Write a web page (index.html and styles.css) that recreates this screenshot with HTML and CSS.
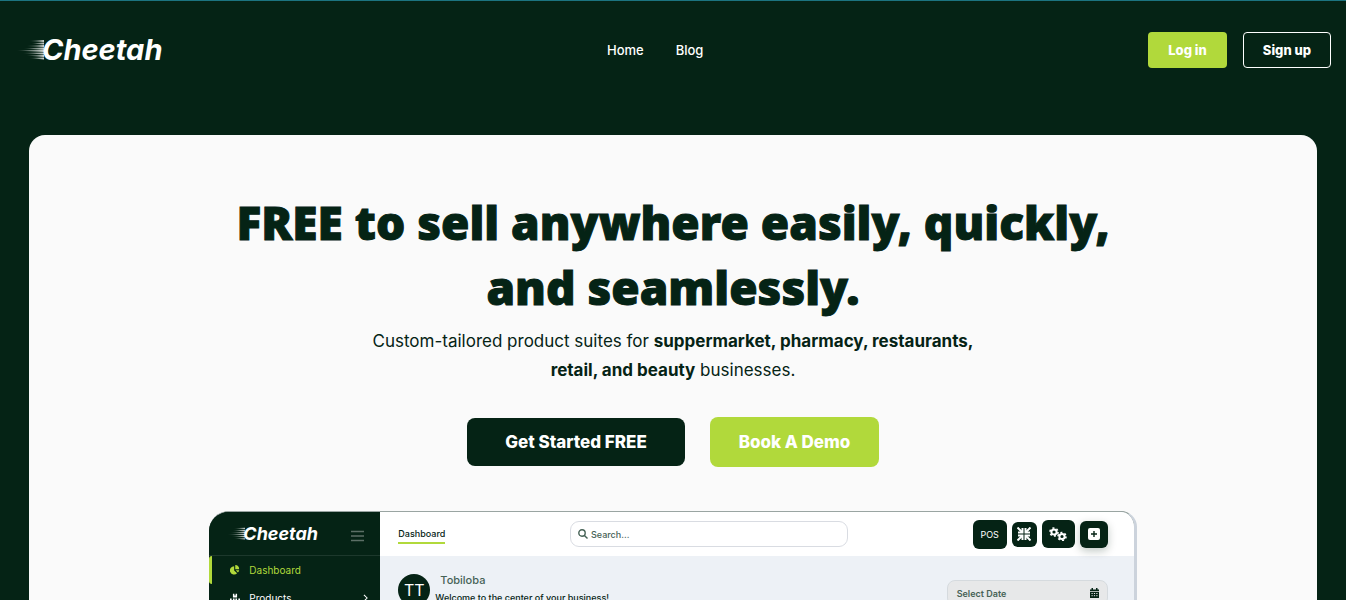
FILE: index.html
```html
<!DOCTYPE html>
<html lang="en">
<head>
<meta charset="utf-8">
<meta name="viewport" content="width=device-width, initial-scale=1">
<title>Cheetah</title>
<link rel="stylesheet" href="styles.css">
</head>
<body>
<header class="site-header">
  <a class="logo" href="#" aria-label="Cheetah">
    <svg class="logo-lines" viewBox="0 0 28 22" aria-hidden="true">
      <defs><linearGradient id="fade" x1="0" x2="1"><stop offset="0" stop-color="#fff" stop-opacity="0"/><stop offset="1" stop-color="#fff" stop-opacity=".8"/></linearGradient></defs>
      <g fill="url(#fade)"><path d="M13 2L28 1V3z"/><path d="M15 4.500L28 3.500V5.500z"/><path d="M10 7L28 6V8z"/><path d="M7 9.500L28 8.500V10.500z"/><path d="M0 11.500L28 10.500V13z"/><path d="M6 14L28 13.500V15.500z"/><path d="M10 16.500L28 16V18z"/><path d="M13 19L28 18.500V20.500z"/></g>
    </svg>
    <span class="logo-name">Cheetah</span>
  </a>
  <nav class="site-nav">
    <a href="#">Home</a>
    <a href="#">Blog</a>
  </nav>
  <div class="account">
    <button class="btn btn-login" type="button">Log in</button>
    <button class="btn btn-signup" type="button">Sign up</button>
  </div>
</header>
<main class="hero">
  <h1 class="hero-title">FREE to sell anywhere easily, quickly, and seamlessly.</h1>
  <p class="hero-text">Custom-tailored product suites for <strong>suppermarket, pharmacy, restaurants, retail, and beauty</strong> businesses.</p>
  <div class="actions">
    <button class="cta cta-start" type="button">Get Started FREE</button>
    <button class="cta cta-demo" type="button">Book A Demo</button>
  </div>
  <section class="preview" aria-label="Dashboard preview">
    <aside class="sidebar">
      <div class="sidebar-head">
        <div class="logo logo-small">
          <svg class="logo-lines" viewBox="0 0 28 22" aria-hidden="true">
            <g fill="url(#fade)"><path d="M10 2L28 1V3z"/><path d="M8 5.500L28 4.500V6.500z"/><path d="M4 8.500L28 7.500V9.500z"/><path d="M0 11.500L28 10.500V13z"/><path d="M6 14.500L28 14V16z"/><path d="M10 18L28 17.500V19.500z"/></g>
          </svg>
          <span class="logo-name">Cheetah</span>
        </div>
        <button class="menu" type="button" aria-label="Menu"><svg viewBox="0 0 13 12"><path d="M0 1.500h13M0 6h13M0 10.500h13" stroke="#5c6f66" stroke-width="1.500"/></svg></button>
      </div>
      <a class="side-link active" href="#">
        <svg viewBox="0 0 12 12"><path d="M5 1.500V6.500L8.500 10A5 5 0 1 1 5 1.500z"/><path d="M6.300 0A5 5 0 0 1 11 5H6.300z"/><path d="M7 6.200H11A5 5 0 0 1 9.500 9z"/></svg>
        <span>Dashboard</span>
      </a>
      <a class="side-link" href="#">
        <svg viewBox="0 0 12 12"><path d="M3.500 1H5.300V3H6.700V1H8.500V5.500H3.500zM0 6.500H2V8.500H3.500V6.500H5.500V11H0zM6.500 6.500H8.500V8.500H10V6.500H12V11H6.500z"/></svg>
        <span>Products</span>
        <svg class="chevron" viewBox="0 0 6 10"><path d="M1 1l4 4-4 4" fill="none" stroke="#fff" stroke-width="1.300"/></svg>
      </a>
    </aside>
    <div class="panel">
      <div class="topbar">
        <a class="tab" href="#">Dashboard</a>
        <label class="search">
          <svg viewBox="0 0 10 10" aria-hidden="true"><g fill="none" stroke="#466256" stroke-width="1.400"><circle cx="4" cy="4" r="3.200"/><path d="M6.400 6.400L9.500 9.500"/></g></svg>
          <input type="text" placeholder="Search..." aria-label="Search">
        </label>
        <div class="tools">
          <button class="tool tool-pos" type="button">POS</button>
          <button class="tool tool-shrink" type="button" aria-label="Exit full screen"><svg viewBox="0 0 14 14" fill="none" stroke="#fff" stroke-width="2"><path d="M.5.500L5 5M13.500.500L9 5M.5 13.500L5 9M13.500 13.500L9 9"/><path d="M1 5.500H5.500V1M13 5.500H8.500V1M1 8.500H5.500V13M13 8.500H8.500V13"/></svg></button>
          <button class="tool tool-settings" type="button" aria-label="Settings"><svg viewBox="0 0 18 14" fill="none" stroke="#fff"><circle cx="5" cy="5" r="2.600" stroke-width="2"/><circle cx="5" cy="5" r="4" stroke-width="1.600" stroke-dasharray="2 2.190"/><circle cx="13" cy="9.500" r="2.600" stroke-width="2"/><circle cx="13" cy="9.500" r="4" stroke-width="1.600" stroke-dasharray="2 2.190"/></svg></button>
          <button class="tool tool-add" type="button" aria-label="Add"><svg viewBox="0 0 12 12"><rect width="12" height="12" rx="2" fill="#fff"/><path d="M6 3v6M3 6h6" stroke="#052315" stroke-width="1.400"/></svg></button>
        </div>
      </div>
      <div class="content">
        <div class="avatar">TT</div>
        <div class="welcome">
          <span class="user">Tobiloba</span>
          <span class="greeting">Welcome to the center of your business!</span>
        </div>
        <button class="date" type="button"><span>Select Date</span>
          <svg viewBox="0 0 9 10"><path d="M0 1.500H1.500V0H3V1.500H6V0H7.500V1.500H9V3H0zM0 3.700H9V10H0z" fill="#052315"/><path d="M1.500 5.500h6M1.500 7.700h6" stroke="#e7e8e9" stroke-dasharray="1.200 1.200"/></svg>
        </button>
      </div>
    </div>
  </section>
</main>
</body>
</html>
```
FILE: styles.css
```css
* { box-sizing: border-box; }
body {
  margin: 0;
  height: 100vh;
  overflow: hidden;
  display: flex;
  flex-direction: column;
  border-top: 1px solid #1c7480;
  background: #052315;
  color: #052315;
  font-family: Inter, "Liberation Sans", sans-serif;
}
a { color: inherit; text-decoration: none; }
button { font: inherit; border: 0; cursor: pointer; }

.site-header {
  display: flex;
  justify-content: space-between;
  align-items: center;
  padding: 31px 15px 0 16px;
  color: #fff;
}
.logo { display: flex; align-items: center; color: #fff; }
.logo-lines { width: 28px; height: 22px; margin-right: -2px; }
.logo-name { font: italic 700 29px/36px Inter, sans-serif; }
.site-nav { display: flex; gap: 32px; font-size: 13px; font-weight: 500; }
.account { display: flex; justify-content: flex-end; gap: 16px; }
.btn {
  height: 36px;
  padding: 0 16px;
  border-radius: 4px;
  color: #fff;
  font-size: 13px;
  font-weight: 800;
}
.btn-login { min-width: 79px; background: #b1d93b; }
.btn-signup { min-width: 88px; background: transparent; border: 1px solid #fff; }

.hero {
  flex: 1;
  min-height: 0;
  margin: 67px 29px 0;
  padding-top: 55px;
  border-radius: 16px 16px 0 0;
  background: #fafafa;
  display: flex;
  flex-direction: column;
  align-items: center;
  text-align: center;
}
.hero-title {
  max-width: 940px;
  margin: 0;
  font: 900 46px/65px "Noto Sans", sans-serif;
  -webkit-text-stroke: 1px #052315;
}
.hero-text {
  max-width: 640px;
  margin: 7px 0 0;
  font-size: 17px;
  line-height: 29px;
}
.actions { display: flex; align-items: center; gap: 25px; margin-top: 32px; }
.cta { border-radius: 8px; color: #fff; font-size: 17px; font-weight: 800; }
.cta-start { min-width: 218px; height: 48px; padding: 0 32px; background: #052315; }
.cta-demo { min-width: 169px; height: 50px; padding: 0 24px; background: #b1d93b; }

.preview {
  flex: 1;
  min-height: 0;
  width: 72%;
  margin-top: 44px;
  display: flex;
  overflow: hidden;
  border-top: 1px solid #9aa5a2;
  border-right: 3px solid #ccd3dc;
  border-radius: 20px 16px 0 0;
  background: #052315;
  font-size: 10px;
  text-align: left;
}
.sidebar { width: 171px; flex: none; background: #052315; color: #fff; }
.sidebar-head {
  height: 44px;
  padding: 0 16px 0 18px;
  display: flex;
  align-items: center;
  justify-content: space-between;
  border-bottom: 1px solid #1d382c;
}
.logo-small .logo-lines { width: 18px; height: 14px; }
.logo-small .logo-name { font-size: 18px; line-height: 24px; }
.menu { padding: 4px 0 0; background: none; }
.menu svg { display: block; width: 13px; height: 12px; }
.side-link {
  height: 28px;
  padding: 0 12px 0 18px;
  display: flex;
  align-items: center;
  gap: 9px;
  border-left: 3px solid transparent;
}
.side-link svg { width: 10px; height: 10px; fill: currentColor; }
.side-link .chevron { width: 5px; height: 8px; margin-left: auto; }
.side-link.active { color: #b1d93b; border-color: #b1d93b; border-radius: 3px 0 0 3px; }

.panel { flex: 1; min-width: 0; background: #edf1f6; }
.topbar {
  height: 44px;
  padding: 0 26px 0 18px;
  display: flex;
  align-items: center;
  justify-content: space-between;
  background: #fff;
}
.tab { padding-bottom: 3px; border-bottom: 2px solid #b1d93b; margin-top: 4px; font-size: 9px; font-weight: 500; }
.search {
  width: 278px;
  height: 26px;
  padding: 0 7px;
  display: flex;
  align-items: center;
  gap: 3px;
  border: 1px solid #d9dce2;
  border-radius: 9px;
}
.search svg { width: 10px; height: 10px; }
.search input { flex: 1; min-width: 0; border: 0; padding: 0; background: none; font: inherit; font-size: 9px; font-weight: 500; }
.search input::placeholder { color: #466256; opacity: 1; }
.tools { display: flex; align-items: center; gap: 5px; }
.tool {
  height: 28px;
  padding: 0;
  display: grid;
  place-items: center;
  border-radius: 6px;
  background: #052315;
  color: #fff;
  font-size: 9px;
}
.tool-pos { width: 34px; height: 29px; }
.tool-shrink { width: 25px; height: 25px; }
.tool-settings { width: 33px; }
.tool-add { width: 28px; height: 27px; box-shadow: 0 3px 8px #05231540; }
.tool-shrink svg { width: 14px; height: 14px; }
.tool-settings svg { width: 18px; height: 14px; }
.tool-add svg { width: 12px; height: 12px; }
.content { display: flex; align-items: flex-start; padding: 18px 26px 0 18px; }
.avatar {
  width: 32px;
  height: 32px;
  flex: none;
  border-radius: 50%;
  background: #052315;
  color: #fff;
  font-size: 16px;
  line-height: 32px;
  text-align: center;
}
.welcome { display: flex; flex-direction: column; padding-left: 5px; }
.user { padding-left: 5px; color: #466256; font-size: 11px; font-weight: 500; line-height: 13px; }
.greeting { font-size: 9px; font-weight: 500; line-height: 22px; }
.date {
  width: 161px;
  height: 26px;
  margin: 6px 0 0 auto;
  padding: 0 8px 0 9px;
  display: flex;
  align-items: center;
  justify-content: space-between;
  border: 1px solid #d5dade;
  border-radius: 8px;
  background: #e7e8e9;
  color: #466256;
  font-size: 9px;
  font-weight: 600;
}
.date svg { width: 9px; height: 10px; }
```
